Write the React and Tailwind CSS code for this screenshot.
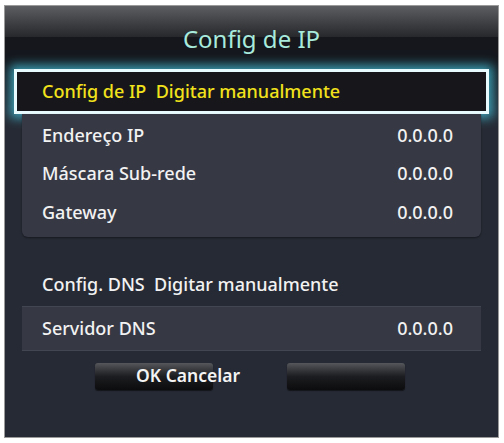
import React from 'react';

const font = { fontFamily: '"Noto Sans", "Open Sans", sans-serif' };

const Row = ({ label, value }) => (
  <div className="flex items-center justify-between h-[38.5px] pl-[20px] pr-[28px] text-[18px] font-medium text-[#f2f2f2]">
    <span>{label}</span>
    <span>{value}</span>
  </div>
);

const App = () => {
  return (
    <div className="w-[504px] h-[443px] bg-white pt-[5px] pl-[4px]" style={font}>
      <div className="w-[495px] h-[433px] border border-[#9a9a9a] bg-[#262a34] flex flex-col overflow-hidden">
        {/* Header */}
        <div className="h-[31px] bg-gradient-to-b from-[#5c5e62] to-[#26282c] flex items-end justify-center">
          <span className="text-[24px] leading-none text-[#a8eadb] translate-y-[14px]">Config de IP</span>
        </div>
        <div className="h-[26px] bg-[#15171d]" />

        {/* Highlighted row */}
        <div className="px-[9px] bg-gradient-to-b from-[#15171d] to-[#262a34] pt-[6px]">
          <div className="h-[45px] border-[3px] border-[#e8fbff] bg-[#17171b] shadow-[0_0_10px_4px_rgba(70,200,225,0.75)] flex items-center pl-[25px] text-[18px] font-medium text-[#f2e21c]">
            Config de IP&nbsp;&nbsp;Digitar manualmente
          </div>
        </div>

        {/* IP group */}
        <div className="mx-[17px] bg-[#363944] rounded-b-[6px] pt-[2px] pb-[5px] shadow-[0_1px_2px_rgba(0,0,0,0.4)]">
          <Row label="Endereço IP" value="0.0.0.0" />
          <Row label="Máscara Sub-rede" value="0.0.0.0" />
          <Row label="Gateway" value="0.0.0.0" />
        </div>

        {/* DNS */}
        <div className="mt-[28px] h-[40px] flex items-center pl-[37px] text-[18px] font-medium text-[#f2f2f2]">
          Config. DNS&nbsp;&nbsp;Digitar manualmente
        </div>
        <div className="mx-[17px] bg-[#363944] border-y border-[#424652] mt-[1px]">
          <div className="flex items-center justify-between h-[43px] pl-[20px] pr-[28px] text-[18px] font-medium text-[#f2f2f2]">
            <span>Servidor DNS</span>
            <span>0.0.0.0</span>
          </div>
        </div>

        {/* Buttons */}
        <div className="relative mt-[12px] h-[28px]">
          <div className="absolute left-[90px] top-0 w-[118px] h-[27px] rounded-[3px] bg-gradient-to-b from-[#55575c] via-[#1c1d20] to-[#0c0c0e] shadow-[0_1px_1px_rgba(0,0,0,0.5)]" />
          <div className="absolute left-[282px] top-0 w-[118px] h-[27px] rounded-[3px] bg-gradient-to-b from-[#55575c] via-[#1c1d20] to-[#0c0c0e] shadow-[0_1px_1px_rgba(0,0,0,0.5)]" />
          <span className="absolute left-[131px] top-0 text-[17.5px] font-semibold text-[#f4f4f4] leading-[24px]">OK Cancelar</span>
        </div>
      </div>
    </div>
  );
};

export default App;
